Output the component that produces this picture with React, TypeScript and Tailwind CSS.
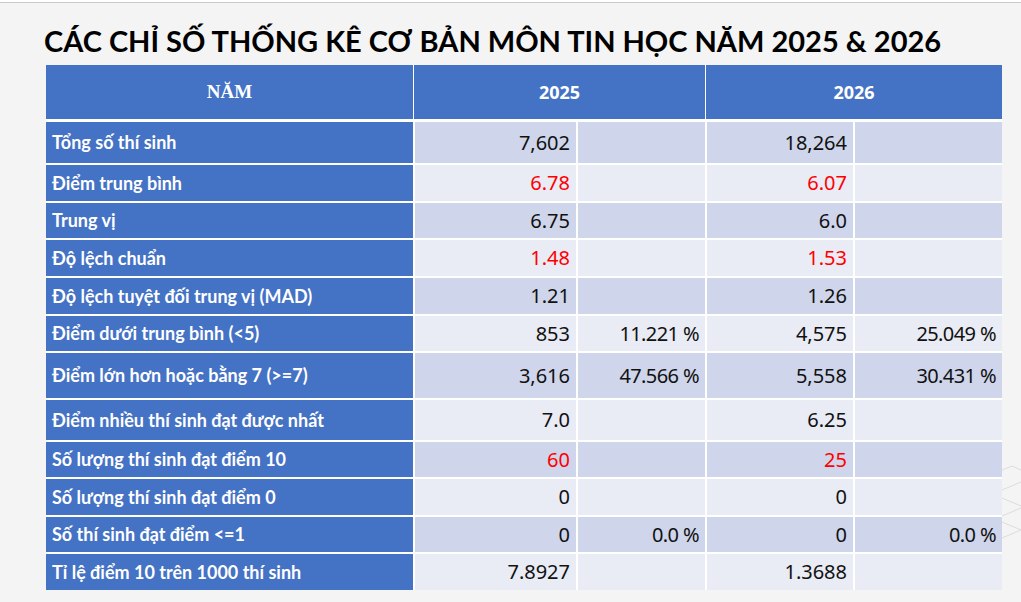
type Row = {
  label: string;
  h: string;
  v1: string;
  p1?: string;
  v2: string;
  p2?: string;
  red?: boolean;
};

const rows: Row[] = [
  { label: "Tổng số thí sinh", h: "h-[41px]", v1: "7,602", v2: "18,264" },
  { label: "Điểm trung bình", h: "h-[36px]", v1: "6.78", v2: "6.07", red: true },
  { label: "Trung vị", h: "h-[35px]", v1: "6.75", v2: "6.0" },
  { label: "Độ lệch chuẩn", h: "h-[36px]", v1: "1.48", v2: "1.53", red: true },
  { label: "Độ lệch tuyệt đối trung vị (MAD)", h: "h-[36px]", v1: "1.21", v2: "1.26" },
  { label: "Điểm dưới trung bình (<5)", h: "h-[35px]", v1: "853", p1: "11.221 %", v2: "4,575", p2: "25.049 %" },
  { label: "Điểm lớn hơn hoặc bằng 7 (>=7)", h: "h-[45px]", v1: "3,616", p1: "47.566 %", v2: "5,558", p2: "30.431 %" },
  { label: "Điểm nhiều thí sinh đạt được nhất", h: "h-[40px]", v1: "7.0", v2: "6.25" },
  { label: "Số lượng thí sinh đạt điểm 10", h: "h-[35px]", v1: "60", v2: "25", red: true },
  { label: "Số lượng thí sinh đạt điểm 0", h: "h-[36px]", v1: "0", v2: "0" },
  { label: "Số thí sinh đạt điểm <=1", h: "h-[35px]", v1: "0", p1: "0.0 %", v2: "0", p2: "0.0 %" },
  { label: "Tỉ lệ điểm 10 trên 1000 thí sinh", h: "h-[36px]", v1: "7.8927", v2: "1.3688" },
];

function Cell({ text, bg, red, pct }: { text?: string; bg: string; red?: boolean; pct?: boolean }) {
  return (
    <div
      className={`${bg} flex items-center justify-end pr-[6px] text-[20px] font-['Noto_Sans',sans-serif] ${
        red ? "text-[#ff0000]" : "text-[#111111]"
      } ${pct ? "tracking-[-0.6px]" : ""}`}
    >
      {text}
    </div>
  );
}

export default function App() {
  return (
    <div className="relative w-[1021px] h-[602px] overflow-hidden bg-[#f4f4f4]">
      <div className="h-[2px] bg-white" />
      <div className="h-px bg-[#c8c8ce]" />

      <svg
        className="absolute right-0 top-[460px]"
        width="19"
        height="90"
        viewBox="0 0 19 90"
        fill="none"
        stroke="#dcdcdc"
        strokeWidth="1"
      >
        <path d="M0 10 L10 6 L19 10" />
        <path d="M0 30 L19 22" />
        <path d="M0 38 L19 46" />
        <path d="M0 56 L19 48" />
        <path d="M0 62 L19 70" />
        <path d="M0 78 L19 70" />
      </svg>

      <h1 className="ml-[44px] mt-[18px] text-[29px] leading-[40px] font-bold text-black font-['Lato',sans-serif] whitespace-nowrap">
        CÁC CHỈ SỐ THỐNG KÊ CƠ BẢN MÔN TIN HỌC NĂM 2025 &amp; 2026
      </h1>

      <div className="ml-[46px] mt-[4px] w-[956px] bg-white">
        <div className="grid grid-cols-[367px_291px_296px] gap-x-[1px] h-[54px] mb-[3px]">
          <div className="bg-[#4472c4] flex items-center justify-center text-white text-[19px] font-bold font-['Liberation_Serif',serif]">
            NĂM
          </div>
          <div className="bg-[#4472c4] flex items-center justify-center text-white text-[18px] font-bold font-['Open_Sans',sans-serif]">
            2025
          </div>
          <div className="bg-[#4472c4] flex items-center justify-center text-white text-[18px] font-bold font-['Open_Sans',sans-serif]">
            2026
          </div>
        </div>

        <div className="flex flex-col gap-y-[2px]">
          {rows.map((r, i) => {
            const bg = i % 2 === 0 ? "bg-[#cfd5ea]" : "bg-[#e9ebf5]";
            return (
              <div
                key={r.label}
                className={`grid grid-cols-[367px_161px_127px_146px_147px] gap-x-[2px] ${r.h}`}
              >
                <div className="bg-[#4472c4] flex items-center pl-[6px] text-white text-[18px] font-bold font-['Lato',sans-serif] whitespace-nowrap">
                  {r.label}
                </div>
                <Cell text={r.v1} bg={bg} red={r.red} />
                <Cell text={r.p1} bg={bg} pct />
                <Cell text={r.v2} bg={bg} red={r.red} />
                <Cell text={r.p2} bg={bg} pct />
              </div>
            );
          })}
        </div>
      </div>
    </div>
  );
}
